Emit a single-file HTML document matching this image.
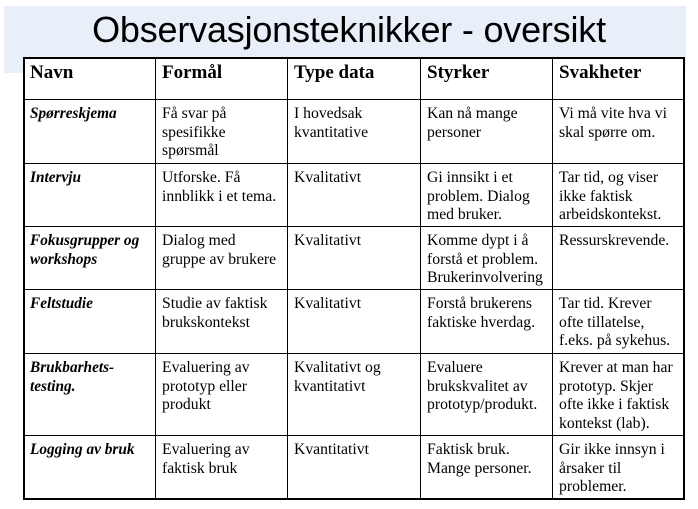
<!DOCTYPE html>
<html><head><meta charset="utf-8"><style>
body{margin:0;width:698px;height:509px;background:#fff;position:relative;overflow:hidden}
.band{position:absolute;left:4px;top:6px;width:682px;height:67px;background:#e9eff8}
.title{position:absolute;left:0;width:698px;top:9px;text-align:center;font-family:"Liberation Sans",sans-serif;font-size:36px;color:#000;letter-spacing:-0.2px}
.t{position:absolute;left:23px;top:57px;width:662px;height:443px;background:#fff;border:2px solid #000;box-sizing:border-box}
.v{position:absolute;top:57px;height:443px;width:1px;background:#000}
.h{position:absolute;left:23px;width:662px;height:1px;background:#000}
.c{position:absolute;font-family:"Liberation Serif",serif;font-size:15.7px;line-height:18.5px;color:#000;white-space:nowrap}
.hd{font-weight:bold;font-size:19px}
.n{font-weight:bold;font-style:italic;font-size:15.3px}
</style></head><body>
<div class="band"></div>
<div class="title">Observasjonsteknikker - oversikt</div>
<div class="t"></div>
<div class="v" style="left:155px"></div><div class="v" style="left:287px"></div><div class="v" style="left:420px"></div><div class="v" style="left:552px"></div>
<div class="h" style="top:99px"></div><div class="h" style="top:163px"></div><div class="h" style="top:226px"></div><div class="h" style="top:289px"></div><div class="h" style="top:353px"></div><div class="h" style="top:435px"></div>

<div class="c hd" style="left:30px;top:64px">Navn</div>
<div class="c hd" style="left:162px;top:64px">Formål</div>
<div class="c hd" style="left:294px;top:64px">Type data</div>
<div class="c hd" style="left:427px;top:64px">Styrker</div>
<div class="c hd" style="left:559px;top:64px">Svakheter</div>

<div class="c n" style="left:30px;top:105px">Spørreskjema</div>
<div class="c" style="left:162px;top:105px">Få svar på<br>spesifikke<br>spørsmål</div>
<div class="c" style="left:294px;top:105px">I hovedsak<br>kvantitative</div>
<div class="c" style="left:427px;top:105px">Kan nå mange<br>personer</div>
<div class="c" style="left:559px;top:105px">Vi må vite hva vi<br>skal spørre om.</div>

<div class="c n" style="left:30px;top:169px">Intervju</div>
<div class="c" style="left:162px;top:169px">Utforske. Få<br>innblikk i et tema.</div>
<div class="c" style="left:294px;top:169px">Kvalitativt</div>
<div class="c" style="left:427px;top:169px">Gi innsikt i et<br>problem. Dialog<br>med bruker.</div>
<div class="c" style="left:559px;top:169px">Tar tid, og viser<br>ikke faktisk<br>arbeidskontekst.</div>

<div class="c n" style="left:30px;top:232px">Fokusgrupper og<br>workshops</div>
<div class="c" style="left:162px;top:232px">Dialog med<br>gruppe av brukere</div>
<div class="c" style="left:294px;top:232px">Kvalitativt</div>
<div class="c" style="left:427px;top:232px">Komme dypt i å<br>forstå et problem.<br>Brukerinvolvering</div>
<div class="c" style="left:559px;top:232px">Ressurskrevende.</div>

<div class="c n" style="left:30px;top:295px">Feltstudie</div>
<div class="c" style="left:162px;top:295px">Studie av faktisk<br>brukskontekst</div>
<div class="c" style="left:294px;top:295px">Kvalitativt</div>
<div class="c" style="left:427px;top:295px">Forstå brukerens<br>faktiske hverdag.</div>
<div class="c" style="left:559px;top:295px">Tar tid. Krever<br>ofte tillatelse,<br>f.eks. på sykehus.</div>

<div class="c n" style="left:30px;top:359px">Brukbarhets-<br>testing.</div>
<div class="c" style="left:162px;top:359px">Evaluering av<br>prototyp eller<br>produkt</div>
<div class="c" style="left:294px;top:359px">Kvalitativt og<br>kvantitativt</div>
<div class="c" style="left:427px;top:359px">Evaluere<br>brukskvalitet av<br>prototyp/produkt.</div>
<div class="c" style="left:559px;top:359px">Krever at man har<br>prototyp. Skjer<br>ofte ikke i faktisk<br>kontekst (lab).</div>

<div class="c n" style="left:30px;top:441px">Logging av bruk</div>
<div class="c" style="left:162px;top:441px">Evaluering av<br>faktisk bruk</div>
<div class="c" style="left:294px;top:441px">Kvantitativt</div>
<div class="c" style="left:427px;top:441px">Faktisk bruk.<br>Mange personer.</div>
<div class="c" style="left:559px;top:441px">Gir ikke innsyn i<br>årsaker til<br>problemer.</div>
</body></html>
